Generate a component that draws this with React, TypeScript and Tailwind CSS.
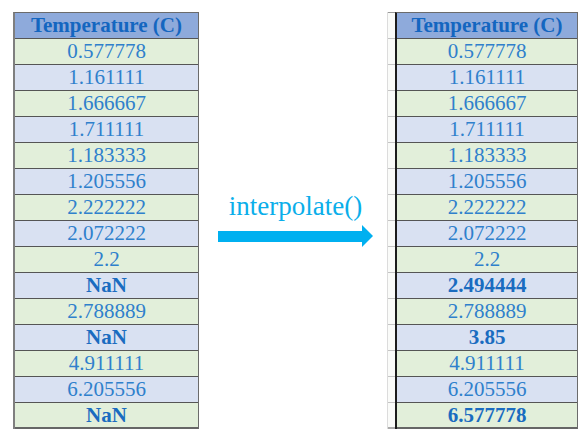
import React from "react";

const left: [string, boolean][] = [
  ["0.577778", false],
  ["1.161111", false],
  ["1.666667", false],
  ["1.711111", false],
  ["1.183333", false],
  ["1.205556", false],
  ["2.222222", false],
  ["2.072222", false],
  ["2.2", false],
  ["NaN", true],
  ["2.788889", false],
  ["NaN", true],
  ["4.911111", false],
  ["6.205556", false],
  ["NaN", true],
];

const right: [string, boolean][] = [
  ["0.577778", false],
  ["1.161111", false],
  ["1.666667", false],
  ["1.711111", false],
  ["1.183333", false],
  ["1.205556", false],
  ["2.222222", false],
  ["2.072222", false],
  ["2.2", false],
  ["2.494444", true],
  ["2.788889", false],
  ["3.85", true],
  ["4.911111", false],
  ["6.205556", false],
  ["6.577778", true],
];

function Table({ rows, leftBorder }: { rows: [string, boolean][]; leftBorder: string }) {
  return (
    <div
      className={`flex flex-col border-t border-r border-[#6b6b6b] border-l-2 ${leftBorder} font-["Liberation_Serif",serif] text-[21px] leading-[25px]`}
    >
      <div className="h-[26px] box-border border-b border-[#555] bg-[#8eaadb] text-center font-bold text-[#1466c0]">
        Temperature (C)
      </div>
      {rows.map(([v, b], i) => (
        <div
          key={i}
          className={`h-[26px] box-border text-center ${
            i === rows.length - 1 ? "border-b-2 border-[#666]" : "border-b border-[#555]"
          } ${i % 2 === 0 ? "bg-[#e2efda]" : "bg-[#d9e1f2]"} ${
            b ? "font-bold text-[#1a6cc0]" : "text-[#2f80cc]"
          }`}
        >
          {v}
        </div>
      ))}
    </div>
  );
}

export default function App() {
  return (
    <div className="w-[588px] h-[446px] bg-white flex items-start pt-[12px]">
      <div className="ml-[13px] w-[186px]">
        <Table rows={left} leftBorder="border-l-[#7f7f7f]" />
      </div>
      <div className="w-[188px] flex flex-col items-center pt-[179px] pl-[5px]">
        <div className="font-['Liberation_Serif',serif] text-[27px] leading-[30px] text-[#0aaeea]">
          interpolate()
        </div>
        <svg width="155" height="22" viewBox="0 0 155 22" className="mt-[4px]">
          <rect x="0" y="6" width="145" height="11" fill="#00b0f0" />
          <polygon points="144,0 155,11 144,22" fill="#00b0f0" />
        </svg>
      </div>
      <div className="w-[8px] flex flex-col border-l border-[#dcdcdc]">
        <div className="h-[1px] bg-[#9a9a9a]" />
        {Array.from({ length: 16 }).map((_, i) => (
          <div
            key={i}
            className={`h-[26px] box-border ${i === 15 ? "border-b-2 border-[#aaa]" : "border-b border-[#c4c4c4]"} bg-[#fafbf9]`}
          />
        ))}
      </div>
      <div className="w-[183px]">
        <Table rows={right} leftBorder="border-l-[#1c1c1c]" />
      </div>
    </div>
  );
}
